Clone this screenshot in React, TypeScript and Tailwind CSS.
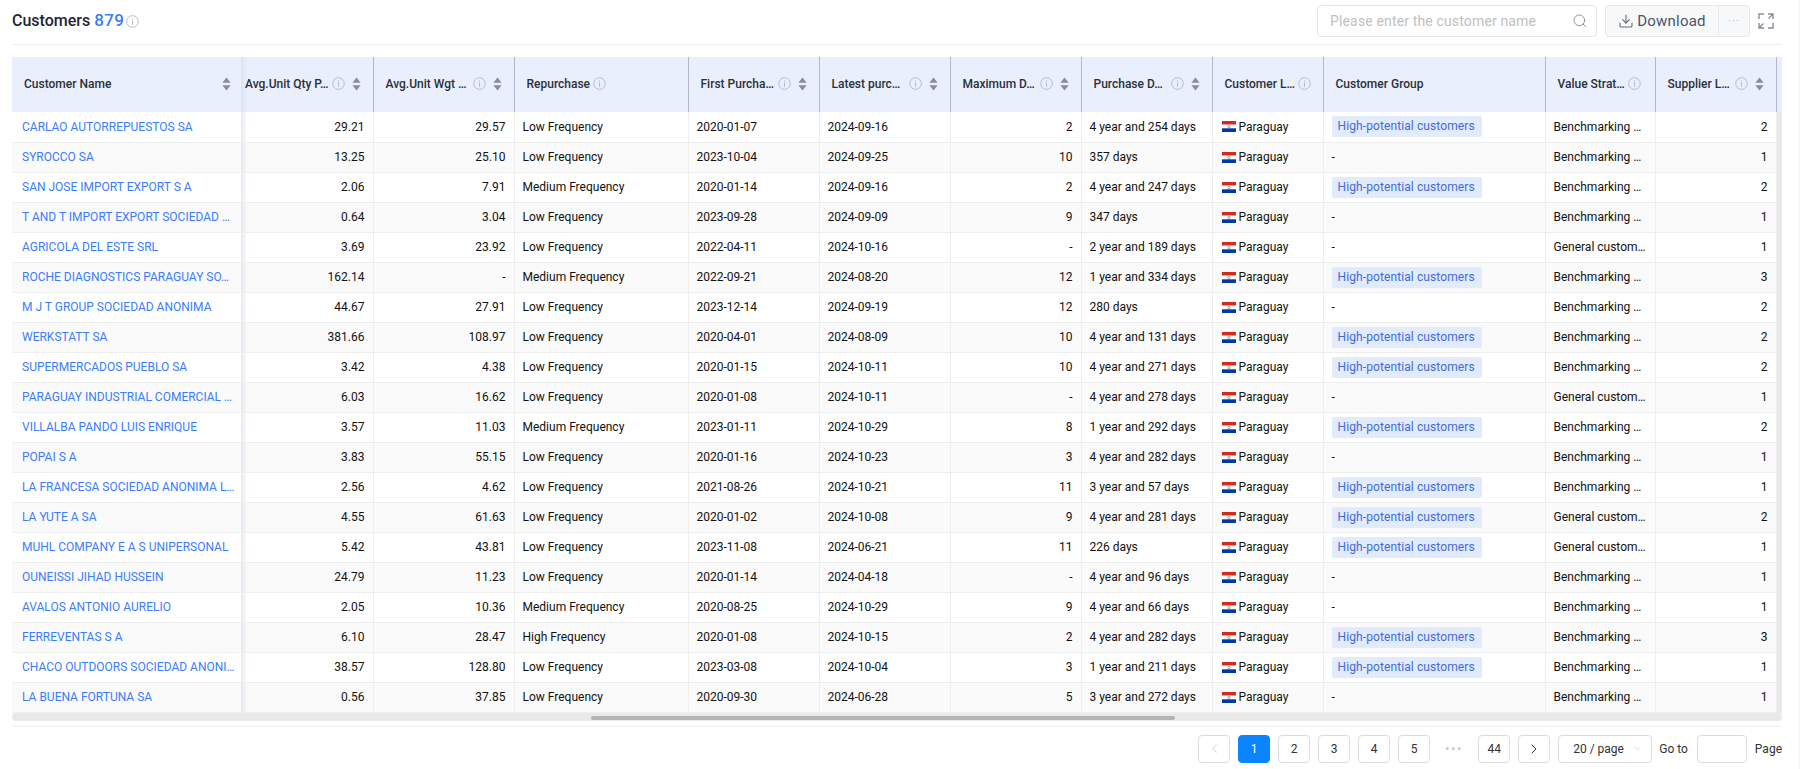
import { ChevronDown, ChevronLeft, ChevronRight, Download, Search } from "lucide-react";

const rows = [
  ["CARLAO AUTORREPUESTOS SA", "29.21", "29.57", "Low Frequency", "2020-01-07", "2024-09-16", "2", "4 year and 254 days", true, "Benchmarking …", "2"],
  ["SYROCCO SA", "13.25", "25.10", "Low Frequency", "2023-10-04", "2024-09-25", "10", "357 days", false, "Benchmarking …", "1"],
  ["SAN JOSE IMPORT EXPORT S A", "2.06", "7.91", "Medium Frequency", "2020-01-14", "2024-09-16", "2", "4 year and 247 days", true, "Benchmarking …", "2"],
  ["T AND T IMPORT EXPORT SOCIEDAD …", "0.64", "3.04", "Low Frequency", "2023-09-28", "2024-09-09", "9", "347 days", false, "Benchmarking …", "1"],
  ["AGRICOLA DEL ESTE SRL", "3.69", "23.92", "Low Frequency", "2022-04-11", "2024-10-16", "-", "2 year and 189 days", false, "General custom…", "1"],
  ["ROCHE DIAGNOSTICS PARAGUAY SO…", "162.14", "-", "Medium Frequency", "2022-09-21", "2024-08-20", "12", "1 year and 334 days", true, "Benchmarking …", "3"],
  ["M J T GROUP SOCIEDAD ANONIMA", "44.67", "27.91", "Low Frequency", "2023-12-14", "2024-09-19", "12", "280 days", false, "Benchmarking …", "2"],
  ["WERKSTATT SA", "381.66", "108.97", "Low Frequency", "2020-04-01", "2024-08-09", "10", "4 year and 131 days", true, "Benchmarking …", "2"],
  ["SUPERMERCADOS PUEBLO SA", "3.42", "4.38", "Low Frequency", "2020-01-15", "2024-10-11", "10", "4 year and 271 days", true, "Benchmarking …", "2"],
  ["PARAGUAY INDUSTRIAL COMERCIAL …", "6.03", "16.62", "Low Frequency", "2020-01-08", "2024-10-11", "-", "4 year and 278 days", false, "General custom…", "1"],
  ["VILLALBA PANDO LUIS ENRIQUE", "3.57", "11.03", "Medium Frequency", "2023-01-11", "2024-10-29", "8", "1 year and 292 days", true, "Benchmarking …", "2"],
  ["POPAI S A", "3.83", "55.15", "Low Frequency", "2020-01-16", "2024-10-23", "3", "4 year and 282 days", false, "Benchmarking …", "1"],
  ["LA FRANCESA SOCIEDAD ANONIMA L…", "2.56", "4.62", "Low Frequency", "2021-08-26", "2024-10-21", "11", "3 year and 57 days", true, "Benchmarking …", "1"],
  ["LA YUTE A SA", "4.55", "61.63", "Low Frequency", "2020-01-02", "2024-10-08", "9", "4 year and 281 days", true, "General custom…", "2"],
  ["MUHL COMPANY E A S UNIPERSONAL", "5.42", "43.81", "Low Frequency", "2023-11-08", "2024-06-21", "11", "226 days", true, "General custom…", "1"],
  ["OUNEISSI JIHAD HUSSEIN", "24.79", "11.23", "Low Frequency", "2020-01-14", "2024-04-18", "-", "4 year and 96 days", false, "Benchmarking …", "1"],
  ["AVALOS ANTONIO AURELIO", "2.05", "10.36", "Medium Frequency", "2020-08-25", "2024-10-29", "9", "4 year and 66 days", false, "Benchmarking …", "1"],
  ["FERREVENTAS S A", "6.10", "28.47", "High Frequency", "2020-01-08", "2024-10-15", "2", "4 year and 282 days", true, "Benchmarking …", "3"],
  ["CHACO OUTDOORS SOCIEDAD ANONI…", "38.57", "128.80", "Low Frequency", "2023-03-08", "2024-10-04", "3", "1 year and 211 days", true, "Benchmarking …", "1"],
  ["LA BUENA FORTUNA SA", "0.56", "37.85", "Low Frequency", "2020-09-30", "2024-06-28", "5", "3 year and 272 days", false, "Benchmarking …", "1"],
] as const;

const columns = [
  { title: "Customer Name", width: 229, info: false, sort: true, cls: "pl-3 pr-[10px]" },
  { title: "Avg.Unit Qty P…", width: 132, info: true, sort: true, cls: "pl-1 pr-3" },
  { title: "Avg.Unit Wgt …", width: 141, info: true, sort: true, cls: "pl-3 pr-3" },
  { title: "Repurchase", width: 174, info: true, sort: false, cls: "pl-3 pr-3" },
  { title: "First Purcha…", width: 131, info: true, sort: true, cls: "pl-3 pr-3" },
  { title: "Latest purc…", width: 131, info: true, sort: true, cls: "pl-3 pr-3" },
  { title: "Maximum D…", width: 131, info: true, sort: true, cls: "pl-3 pr-3" },
  { title: "Purchase D…", width: 131, info: true, sort: true, cls: "pl-3 pr-3" },
  { title: "Customer L…", width: 111, info: true, sort: false, cls: "pl-3 pr-3" },
  { title: "Customer Group", width: 222, info: false, sort: false, cls: "pl-3 pr-3" },
  { title: "Value Strat…", width: 110, info: true, sort: false, cls: "pl-3 pr-3" },
  { title: "Supplier L…", width: 121, info: true, sort: true, cls: "pl-3 pr-3" },
];

function InfoIcon() {
  return (
    <svg width="13" height="13" viewBox="0 0 13 13" className="shrink-0" fill="none">
      <circle cx="6.5" cy="6.5" r="5.8" stroke="#b9bcc4" />
      <rect x="6" y="3.2" width="1" height="1.2" fill="#b9bcc4" />
      <rect x="6" y="5.4" width="1" height="4.4" fill="#b9bcc4" />
    </svg>
  );
}

function SortIcon() {
  return (
    <svg width="9" height="14" viewBox="0 0 9 14" className="shrink-0" fill="#8a8d96">
      <path d="M4.5 0.5 L8.6 5.8 L0.4 5.8 Z" />
      <path d="M0.4 8.2 L8.6 8.2 L4.5 13.5 Z" />
    </svg>
  );
}

function ParaguayFlag() {
  return (
    <svg width="14" height="11" viewBox="0 0 14 11" className="ml-[1px] shrink-0">
      <rect width="14" height="3.7" fill="#d52b1e" />
      <rect y="3.7" width="14" height="3.6" fill="#ffffff" />
      <rect y="7.3" width="14" height="3.7" fill="#0038a8" />
      <circle cx="7" cy="5.5" r="1.2" fill="none" stroke="#7c8a6a" strokeWidth="0.7" />
    </svg>
  );
}

function ExpandIcon() {
  return (
    <svg width="16" height="16" viewBox="0 0 16 16" fill="none" stroke="#8b8e98" strokeWidth="1.4">
      <path d="M1 6 V1 H6" />
      <path d="M15 10 V15 H10" />
      <path d="M10 1 H15 V6 M15 1 L10.5 5.5" />
      <path d="M1 10 V15 H6 M1 15 L5.5 10.5" />
    </svg>
  );
}

function Cell({ children, right, cls = "" }: { children: React.ReactNode; right?: boolean; cls?: string }) {
  return (
    <td className={`h-[30px] border-r border-b border-[#eeeeee] px-2 whitespace-nowrap overflow-hidden ${right ? "text-right" : "text-left"} ${cls}`}>
      {children}
    </td>
  );
}

function PageButton({ children, active }: { children: React.ReactNode; active?: boolean }) {
  return (
    <div
      className={`flex h-[28px] w-[32px] items-center justify-center rounded border text-[12px] ${
        active ? "border-[#0a84ff] bg-[#0a84ff] text-white" : "border-[#dcdcdc] bg-white text-[#333333]"
      }`}
    >
      {children}
    </div>
  );
}

export default function App() {
  return (
    <div className="h-[769px] w-full overflow-hidden bg-[#f8f8fc] pr-[2px] font-['Roboto',sans-serif] text-[12px] text-[#111111]">
      <div className="h-full bg-white pl-3 pr-4">
        {/* toolbar */}
        <div className="flex h-[45px] items-start justify-between border-b border-[#eeeeee] pr-2">
          <div className="flex h-[42px] items-center">
            <span className="text-[16px] font-medium text-[#1f2430]">Customers</span>
            <span className="ml-[4px] text-[17px] font-medium tracking-[0.4px] text-[#3b7cff]">879</span>
            <span className="ml-[2px]">
              <InfoIcon />
            </span>
          </div>
          <div className="flex items-center pt-[5px]">
            <div className="flex h-[32px] w-[280px] items-center justify-between rounded-sm border border-[#e6e6e6] pl-3 pr-2">
              <span className="text-[14px] tracking-[0.15px] text-[#c0c0c0]">Please enter the customer name</span>
              <Search size={16} strokeWidth={1.4} className="text-[#8d8d8d]" />
            </div>
            <div className="ml-[8px] flex h-[32px] w-[145px] items-center rounded border border-[#e8e8ec] bg-[#f7f8fa]">
              <div className="flex h-full w-[113px] items-center justify-center gap-[3px] border-r border-[#e8e8ec] text-[15px] tracking-[0.2px] text-[#4a5568]">
                <Download size={16} strokeWidth={1.6} className="text-[#666b75]" />
                <span>Download</span>
              </div>
              <div className="flex-1 text-center text-[12px] tracking-[1px] text-[#c4c4c8]">···</div>
            </div>
            <div className="ml-[8px]">
              <ExpandIcon />
            </div>
          </div>
        </div>

        {/* table */}
        <div className="mt-3 flex w-[1770px]">
          <table className="w-[1764px] table-fixed border-collapse">
            <colgroup>
              {columns.map((c) => (
                <col key={c.title} style={{ width: c.width }} />
              ))}
            </colgroup>
            <thead>
              <tr className="bg-[#e9effd]">
                {columns.map((c, i) => (
                  <th key={c.title} className={`relative h-[55px] p-0 font-medium text-[#2b2f38] ${i === 0 ? "" : "border-r border-[#b3b6c6]"}`}>
                    <div className={`flex items-center pb-[2px] ${c.cls}`}>
                      <span className={`whitespace-nowrap ${c.sort || c.title === "Customer Group" ? "flex-1 text-left" : "text-left"}`}>{c.title}</span>
                      {c.info && (
                        <span className={c.sort ? "mr-[7px] ml-[4px]" : "ml-[3px]"}>
                          <InfoIcon />
                        </span>
                      )}
                      {c.sort && <SortIcon />}
                    </div>
                    {i === 0 && <div className="absolute top-0 -right-[6px] h-full w-[6px] bg-gradient-to-r from-[#dfe3f0] to-transparent" />}
                  </th>
                ))}
              </tr>
            </thead>
            <tbody>
              {rows.map((r, i) => (
                <tr key={r[0]} className={i % 2 ? "bg-[#fafafa]" : "bg-white"}>
                  <td className="relative h-[30px] border-b border-[#eeeeee] pl-[10px] pr-1 whitespace-nowrap text-[#3b7cff]">
                    {r[0]}
                    <div className="absolute top-0 -right-[6px] h-full w-[6px] bg-gradient-to-r from-[#e4e6f0] to-transparent" />
                  </td>
                  <Cell right>{r[1]}</Cell>
                  <Cell right>{r[2]}</Cell>
                  <Cell>{r[3]}</Cell>
                  <Cell>{r[4]}</Cell>
                  <Cell>{r[5]}</Cell>
                  <Cell right>{r[6]}</Cell>
                  <Cell>{r[7]}</Cell>
                  <Cell>
                    <div className="flex items-center gap-[3px]">
                      <ParaguayFlag />
                      <span>Paraguay</span>
                    </div>
                  </Cell>
                  <Cell>
                    {r[8] ? <div className="h-[21px] w-[150px] rounded-[2px] bg-[#e2ebfc] px-[6px] leading-[21px] tracking-[0.1px] text-[#3f6ad8]">High-potential customers</div> : "-"}
                  </Cell>
                  <Cell>{r[9]}</Cell>
                  <Cell right>{r[10]}</Cell>
                </tr>
              ))}
            </tbody>
          </table>
          <div className="flex w-[6px] flex-col">
            <div className="h-[55px] bg-[#e9effd]" />
            <div className="flex-1 bg-[#e9e9e9]" />
          </div>
        </div>

        {/* horizontal scrollbar */}
        <div className="w-[1770px] border-b border-[#eeeeee]">
          <div className="relative h-[8px] rounded-sm bg-[#e9e9e9]">
            <div className="absolute top-[3px] left-[579px] h-[4px] w-[584px] rounded-sm bg-[#b4b4b4]" />
          </div>
          <div className="h-[5px]" />
        </div>

        {/* pagination */}
        <div className="flex w-[1770px] items-center justify-end pt-[8px]">
          <div className="flex items-center gap-2">
            <PageButton>
              <ChevronLeft size={15} strokeWidth={1.2} className="text-[#c4c4c4]" />
            </PageButton>
            <PageButton active>1</PageButton>
            <PageButton>2</PageButton>
            <PageButton>3</PageButton>
            <PageButton>4</PageButton>
            <PageButton>5</PageButton>
            <div className="flex w-[32px] justify-center text-[12px] tracking-[2px] text-[#c4c4c4]">•••</div>
            <PageButton>44</PageButton>
            <PageButton>
              <ChevronRight size={16} strokeWidth={1.5} className="text-[#333333]" />
            </PageButton>
            <div className="flex h-[28px] w-[94px] items-center justify-between rounded border border-[#dcdcdc] pl-[14px] pr-2 text-[#333333]">
              <span>20 / page</span>
              <ChevronDown size={11} strokeWidth={1.2} className="text-[#bbbbbb]" />
            </div>
          </div>
          <span className="ml-[7px] text-[#333333]">Go to</span>
          <div className="ml-[9px] h-[28px] w-[50px] rounded border border-[#dcdcdc]" />
          <span className="ml-2 text-[#333333]">Page</span>
        </div>
      </div>
    </div>
  );
}
